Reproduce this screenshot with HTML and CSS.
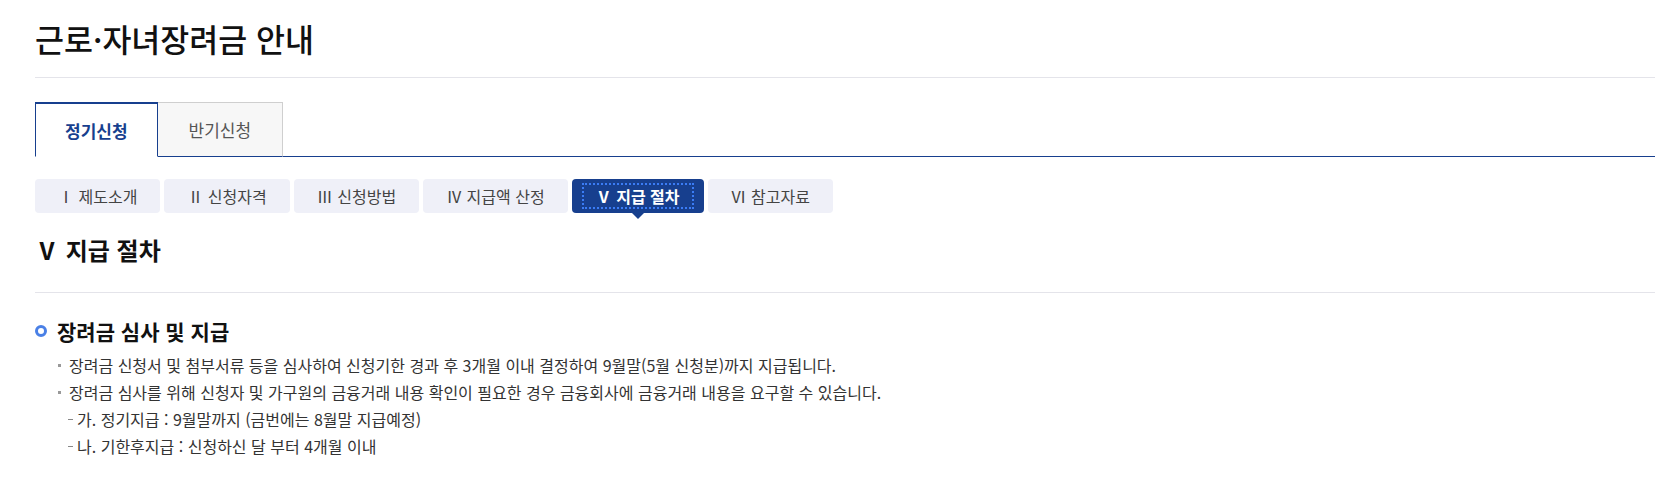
FILE: index.html
```html
<!DOCTYPE html>
<html lang="ko">
	<head>
		<meta charset="utf-8">
		<title>근로·자녀장려금 안내</title>
		<meta name="viewport" content="width=device-width, initial-scale=1">
		<link rel="stylesheet" href="styles.css">
	</head>
	<body>
		<div class="wrap">
			<!-- 페이지 제목 -->
			<header class="page-head">
				<h1>근로·자녀장려금 안내</h1>
			</header>

			<!-- 상단 탭 -->
			<ul class="tab">
				<li class="on"><a href="#">정기신청</a></li>
				<li><a href="#">반기신청</a></li>
			</ul>

			<!-- 목차 버튼 -->
			<ul class="step">
				<li><a href="#">Ⅰ 제도소개</a></li>
				<li><a href="#">Ⅱ 신청자격</a></li>
				<li><a href="#">Ⅲ 신청방법</a></li>
				<li><a href="#">Ⅳ 지급액 산정</a></li>
				<li class="on"><a href="#"><span>Ⅴ 지급 절차</span></a></li>
				<li><a href="#">Ⅵ 참고자료</a></li>
			</ul>

			<h2 class="sec-title">Ⅴ 지급 절차</h2>

			<div class="cont">
				<h3 class="dot-title">장려금 심사 및 지급</h3>
				<ul class="bul">
					<li>장려금 신청서 및 첨부서류 등을 심사하여 신청기한 경과 후 3개월 이내 결정하여 9월말(5월 신청분)까지 지급됩니다.</li>
					<li>장려금 심사를 위해 신청자 및 가구원의 금융거래 내용 확인이 필요한 경우 금융회사에 금융거래 내용을 요구할 수 있습니다.</li>
				</ul>
				<ul class="dash">
					<li>가. 정기지급 : 9월말까지 (금번에는 8월말 지급예정)</li>
					<li>나. 기한후지급 : 신청하신 달 부터 4개월 이내</li>
				</ul>
			</div>
		</div>
	</body>
</html>
```

FILE: styles.css
```css
body {
	margin: 0;
	background: #fff;
	color: #333;
	font-family: "Noto Sans CJK KR", "Noto Sans", sans-serif;
}
ul {
	margin: 0;
	padding: 0;
	list-style: none;
}
a {
	color: inherit;
	text-decoration: none;
}
.wrap {
	margin: 0 20px 0 35px;
}

/* 제목 */
.page-head {
	padding: 16px 0;
	border-bottom: 1px solid #e4e4ea;
}
.page-head h1 {
	margin: 0;
	font-size: 31.5px;
	line-height: 45px;
	font-weight: 500;
	color: #111;
}

/* 탭 */
.tab {
	display: flex;
	margin-top: 24px;
	border-bottom: 1px solid #173f8e;
}
.tab li {
	box-sizing: border-box;
	height: 55px;
	margin-bottom: -1px;
	border: 1px solid #cfcfcf;
	border-bottom-color: #173f8e;
	border-left: none;
	background: #f7f7f7;
}
.tab li a {
	display: flex;
	align-items: center;
	height: 100%;
	padding: 0 31px;
	font-size: 17px;
	color: #555;
}
.tab li.on {
	border: 1px solid #173f8e;
	border-top-width: 2px;
	border-bottom-color: #fff;
	background: #fff;
}
.tab li.on a {
	padding: 0 29px 1px;
	font-weight: 700;
	color: #173f8e;
}

/* 목차 */
.step {
	display: flex;
	gap: 4px;
	margin-top: 22px;
}
.step li {
	position: relative;
	border-radius: 4px;
	background: #eff0f8;
}
.step li a {
	display: block;
	padding: 0 23px;
	font-size: 16px;
	line-height: 34px;
	color: #444;
}
.step li.on {
	background: #173f8e;
}
.step li.on a {
	padding: 6px 12px;
	line-height: 22px;
	font-weight: 700;
	color: #fff;
}
.step li.on span {
	display: block;
	padding: 0 12px;
	outline: 2px dotted #3b7cf5;
}
.step li.on::after {
	content: "";
	position: absolute;
	top: 100%;
	left: 50%;
	margin-left: -6px;
	border-top: 6px solid #173f8e;
	border-left: 6px solid transparent;
	border-right: 6px solid transparent;
}

/* 본문 */
.sec-title {
	margin: 21px 0 0;
	padding-bottom: 26px;
	border-bottom: 1px solid #e4e4ea;
	font-size: 24px;
	line-height: 32px;
	font-weight: 700;
	color: #111;
}
.dot-title {
	display: flex;
	align-items: center;
	gap: 10px;
	margin: 23px 0 0;
	font-size: 21px;
	line-height: 30px;
	font-weight: 700;
	color: #111;
}
.dot-title::before {
	content: "";
	box-sizing: border-box;
	width: 12px;
	height: 12px;
	border: 3px solid #4a80e6;
	border-radius: 50%;
}
.bul {
	margin-top: 6px;
}
.bul li,
.dash li {
	position: relative;
	font-size: 16px;
	line-height: 27px;
	color: #333;
}
.bul li {
	padding-left: 34px;
}
.bul li::before {
	content: "";
	position: absolute;
	left: 23px;
	top: 12px;
	width: 3px;
	height: 3px;
	background: #999;
}
.dash li {
	padding-left: 42px;
}
.dash li::before {
	content: "";
	position: absolute;
	left: 33px;
	top: 13px;
	width: 5px;
	height: 1px;
	background: #888;
}
```
